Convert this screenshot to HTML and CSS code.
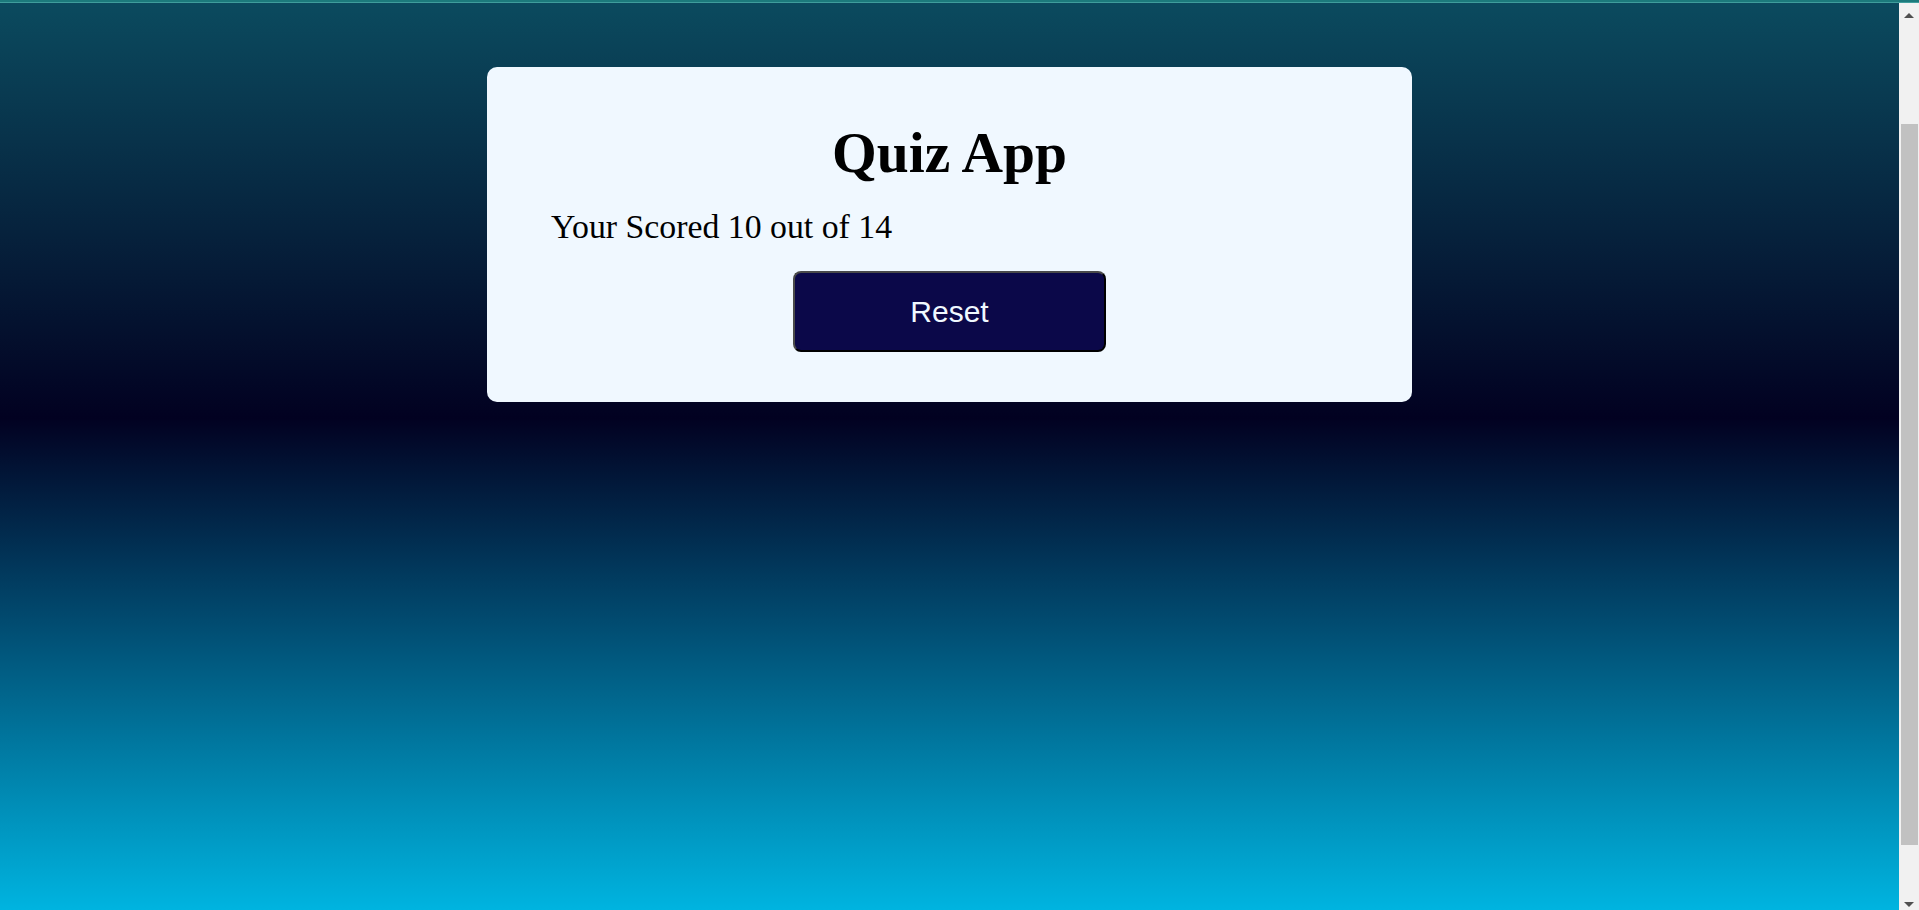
FILE: index.html
```html
<!DOCTYPE html>
<html lang="en">
<head>
<meta charset="utf-8">
<title>Quiz App</title>
<link rel="stylesheet" href="styles.css">
</head>
<body>
<div class="topline"></div>
<div class="scrollbar" aria-hidden="true">
  <span class="arrow arrow-up"></span>
  <span class="thumb"></span>
  <span class="arrow arrow-down"></span>
</div>
<main class="page">
  <section class="card">
    <h1 class="title">Quiz App</h1>
    <p class="score">Your Scored 10 out of 14</p>
    <button class="reset" type="button">Reset</button>
  </section>
</main>
<script src="script.js"></script>
</body>
</html>
```

FILE: styles.css
```css
html {
  height: 1107px;
  background: linear-gradient(to bottom, #0b4b5f 135px, #020121 553px, #00b4e0 1045px);
}

body {
  margin: 0;
  height: 1107px;
  font-family: "Liberation Serif", "Times New Roman", serif;
}

.topline {
  position: fixed;
  top: 0;
  left: 0;
  right: 0;
  height: 2px;
  background: #1c7a7c;
  border-bottom: 1px solid #3f9d9c;
  z-index: 2;
}

.scrollbar {
  position: fixed;
  top: 0;
  right: 0;
  bottom: 0;
  width: 20px;
  background: #f1f1f1;
  z-index: 1;
}

.thumb {
  position: absolute;
  top: 124px;
  height: 721px;
  left: 2px;
  right: 1px;
  background: #c1c1c1;
}

.arrow {
  position: absolute;
  left: 5px;
  width: 0;
  height: 0;
  border-left: 5px solid transparent;
  border-right: 5px solid transparent;
}

.arrow-up {
  top: 13px;
  border-bottom: 5px solid #505050;
}

.arrow-down {
  bottom: 3px;
  border-top: 5px solid #505050;
}

.page {
  padding-top: 202px;
  padding-right: 20px;
  display: flex;
  justify-content: center;
}

.card {
  width: 925px;
  box-sizing: border-box;
  background: #f0f8ff;
  border-radius: 10px;
  padding: 55px 64px 50px;
  display: flex;
  flex-direction: column;
}

.title {
  margin: 0;
  font-size: 57.5px;
  line-height: 62px;
  font-weight: bold;
  text-align: center;
  color: #000;
}

.score {
  margin: 24px 0 26px;
  font-size: 33.8px;
  line-height: 37px;
  color: #000;
}

.reset {
  align-self: center;
  width: 313px;
  height: 81px;
  background: #0b0849;
  color: #f0f8ff;
  font-family: "Liberation Sans", Arial, sans-serif;
  font-size: 30px;
  border: 2px outset #555;
  border-color: #4a4a4a #111 #000 #4a4a4a;
  border-radius: 8px;
  cursor: pointer;
}
```

FILE: script.js
```js
window.scrollTo(0, 135);
```
